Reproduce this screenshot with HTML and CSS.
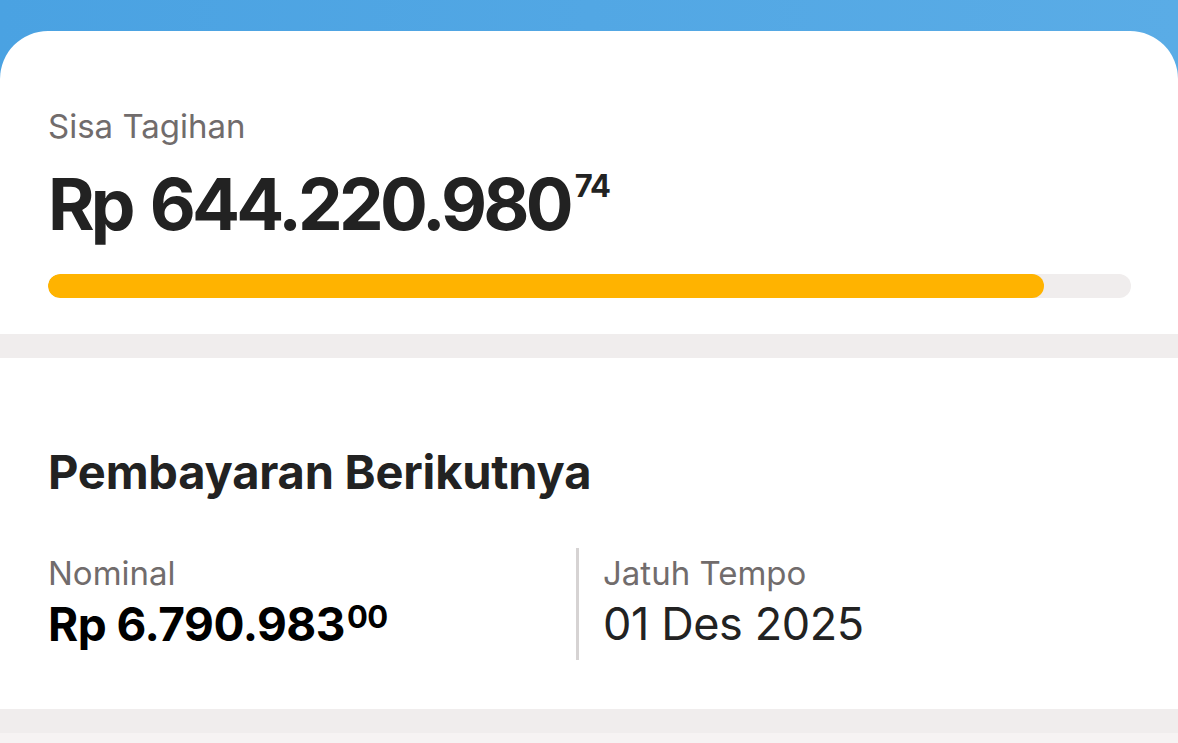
FILE: index.html
```html
<!DOCTYPE html>
<html lang="id">
<head>
    <meta charset="UTF-8">
    <meta name="viewport" content="width=device-width, initial-scale=1.0">
    <title>Sisa Tagihan</title>
    <link rel="stylesheet" href="styles.css">
</head>
<body>
    <!-- Header strip -->
    <div class="header"></div>

    <div class="card">
        <!-- Remaining bill -->
        <div class="summary">
            <div class="label">Sisa Tagihan</div>
            <div class="amount">Rp 644.220.980<sup class="cents">74</sup></div>
            <div class="progress">
                <div class="progress-fill" style="width: 92%"></div>
            </div>
        </div>

        <div class="divider"></div>

        <!-- Next payment -->
        <div class="next-payment">
            <h2 class="section-title">Pembayaran Berikutnya</h2>
            <div class="info-row">
                <div class="info-col">
                    <div class="label">Nominal</div>
                    <div class="info-value bold">Rp 6.790.983<sup class="cents-small">00</sup></div>
                </div>
                <div class="info-col with-line">
                    <div class="label">Jatuh Tempo</div>
                    <div class="info-value">01 Des 2025</div>
                </div>
            </div>
        </div>

        <div class="divider"></div>
        <div class="footer"></div>
    </div>
</body>
</html>
```

FILE: styles.css
```css
* {
    margin: 0;
    padding: 0;
    box-sizing: border-box;
}

body {
    font-family: Inter, 'Noto Sans', sans-serif;
    background: #f6f3f3;
    color: #222;
    height: 100vh;
    overflow: hidden;
}

/* Blue header behind the card */
.header {
    height: 80px;
    background: linear-gradient(90deg, #4aa2e2 0%, #5aace6 100%);
}

.card {
    margin-top: -49px;
    background: #fff;
    border-radius: 48px 48px 0 0;
    position: relative;
}

.summary {
    padding: 76px 47px 36px 48px;
}

.label {
    font-size: 33px;
    color: #716c6c;
    letter-spacing: 0;
    line-height: 38px;
}

.amount {
    font-size: 71px;
    font-weight: 700;
    letter-spacing: -3.8px;
    word-spacing: 5px;
    line-height: 84px;
    margin-top: 17px;
    color: #222;
}

.cents {
    font-size: 31px;
    letter-spacing: -1px;
    word-spacing: 0;
    vertical-align: 0;
    position: relative;
    top: -33px;
    margin-left: 5px;
}

.progress {
    height: 24px;
    background: #f0eded;
    border-radius: 12px;
    margin-top: 13px;
    overflow: hidden;
}

.progress-fill {
    height: 100%;
    background: #ffb300;
    border-radius: 12px;
}

.divider {
    height: 24px;
    background: #f0eded;
}

.next-payment {
    padding: 86px 48px 49px 48px;
}

.section-title {
    font-size: 47px;
    font-weight: 700;
    line-height: 56px;
    letter-spacing: -0.2px;
    color: #222;
}

.info-row {
    display: flex;
    margin-top: 48px;
}

.info-col {
    width: 528px;
    padding-top: 6px;
}

.info-col.with-line {
    border-left: 3px solid #d6d3d3;
    padding-left: 24px;
    padding-bottom: 8px;
    flex: 1;
}

.info-value {
    font-size: 45px;
    line-height: 56px;
    letter-spacing: -0.4px;
    margin-top: 4px;
    color: #222;
}

.info-value.bold {
    font-size: 46px;
    font-weight: 700;
    letter-spacing: -0.5px;
    color: #000;
}

.cents-small {
    font-size: 31px;
    vertical-align: 0;
    position: relative;
    top: -13px;
    margin-left: 2px;
    font-weight: 700;
}

.footer {
    height: 40px;
    background: #f6f3f3;
}
```
